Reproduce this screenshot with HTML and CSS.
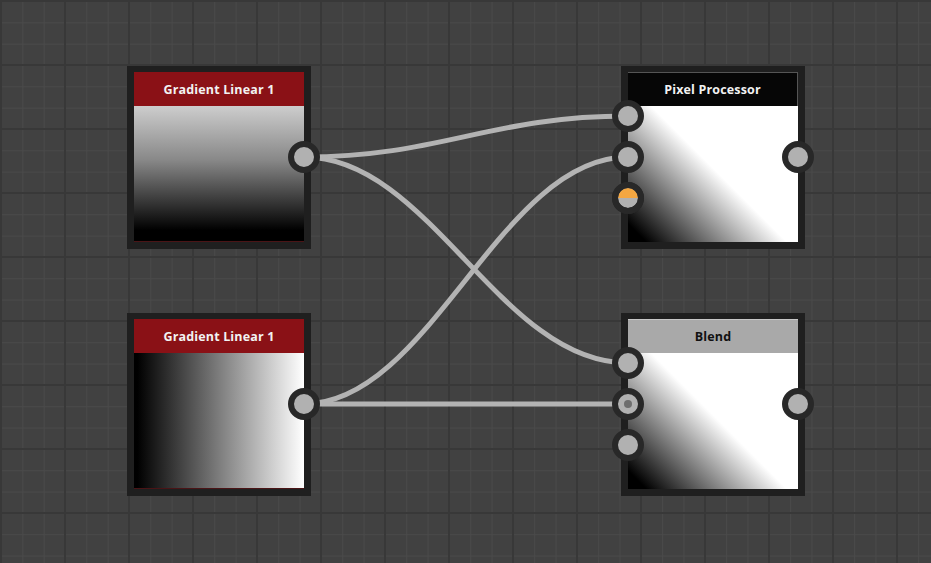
FILE: index.html
```html
<!DOCTYPE html>
<html>
<head>
<meta charset="utf-8">
<link rel="stylesheet" href="styles.css">
</head>
<body>
<div class="canvas">
  <div class="node n1">
    <div class="inner red">
      <div class="header">Gradient Linear 1</div>
      <div class="preview grad-v"></div>
    </div>
  </div>
  <div class="node n2">
    <div class="inner red">
      <div class="header">Gradient Linear 1</div>
      <div class="preview grad-h"></div>
    </div>
  </div>
  <div class="node n3">
    <div class="inner dark">
      <div class="header">Pixel Processor</div>
      <div class="preview grad-d"></div>
    </div>
  </div>
  <div class="node n4">
    <div class="inner gray">
      <div class="header">Blend</div>
      <div class="preview grad-d"></div>
    </div>
  </div>
  <svg class="wires" width="931" height="563" viewBox="0 0 931 563">
    <g class="wire">
      <path d="M304 157 C 440 157, 490 116, 628 116"/>
      <path d="M304 157 C 430 157, 500 363, 628 363"/>
      <path d="M304 404 C 430 404, 500 157, 628 157"/>
      <path d="M304 404 L 628 404"/>
    </g>
    <g class="port">
      <circle cx="304" cy="157" r="13"/>
      <circle cx="304" cy="404" r="13"/>
      <circle cx="628" cy="116" r="13"/>
      <circle cx="628" cy="157" r="13"/>
      <circle cx="798" cy="157" r="13"/>
      <circle cx="628" cy="363" r="13"/>
      <circle cx="628" cy="404" r="13"/>
      <circle cx="628" cy="445" r="13"/>
      <circle cx="798" cy="404" r="13"/>
      <circle cx="628" cy="198" r="13"/>
    </g>
    <path class="half" d="M618 198 A10 10 0 0 1 638 198 Z"/>
    <circle class="ring" cx="628" cy="198" r="13"/>
    <circle class="dot" cx="628" cy="404" r="4"/>
  </svg>
</div>
</body>
</html>
```
FILE: styles.css
```css
html, body {
  margin: 0;
  padding: 0;
}
.canvas {
  position: relative;
  width: 931px;
  height: 563px;
  overflow: hidden;
  background-color: #414141;
  background-image:
    linear-gradient(#383838 2px, transparent 2px),
    linear-gradient(90deg, #383838 2px, transparent 2px),
    linear-gradient(#4a4a4a 1px, transparent 1px),
    linear-gradient(90deg, #4a4a4a 1px, transparent 1px);
  background-size: 64px 64px, 64px 64px, 21.333px 21.333px, 21.333px 21.333px;
  background-position: 0 0, 0 0, 1px 1px, 1px 1px;
  font-family: "Open Sans", "DejaVu Sans", sans-serif;
}
.node {
  position: absolute;
  width: 170px;
  height: 170px;
  padding: 6px 7px 7px 7px;
  background: #1f1f1f;
}
.n1 { left: 127px; top: 66px; }
.n2 { left: 127px; top: 313px; }
.n3 { left: 621px; top: 66px; }
.n4 { left: 621px; top: 313px; }
.inner {
  display: flex;
  flex-direction: column;
  width: 170px;
  height: 170px;
  box-sizing: border-box;
}
.header {
  height: 34px;
  flex: 0 0 34px;
  display: flex;
  align-items: center;
  justify-content: center;
  font-size: 12.5px;
  font-weight: 700;
  color: #f2f2f2;
  letter-spacing: 0.15px;
}
.preview {
  flex: 1;
}
.red .header { background: #8a1116; }
.red { border-bottom: 1px solid #4a1416; }
.dark .header { background: #060606; border-top: 1px solid #555; border-right: 1px solid #555; box-sizing: border-box; }
.gray .header { background: #a9a9a9; color: #111; border-top: 1px solid #c8c8c8; box-sizing: border-box; }
.grad-v { background: linear-gradient(to bottom, #cdcdcd 0%, #888 40%, #000 92%); }
.grad-h { background: linear-gradient(to right, #000 2%, #fff 100%); }
.grad-d { background: linear-gradient(45deg, #000 6%, #fff 52%); }
.wires {
  position: absolute;
  left: 0;
  top: 0;
}
.wire path {
  fill: none;
  stroke: #b3b3b3;
  stroke-width: 5;
}
.port circle {
  fill: #b1b1b1;
  stroke: #282828;
  stroke-width: 6;
}
.half { fill: #f4a742; }
.ring { fill: none; stroke: #282828; stroke-width: 6; }
.dot { fill: #6e6e6e; }
```
